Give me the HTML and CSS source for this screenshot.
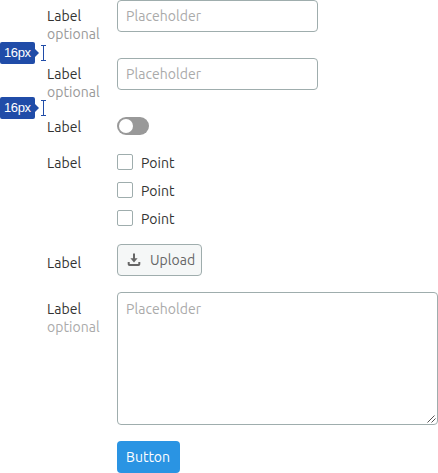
FILE: index.html
```html
<!DOCTYPE html>
<html lang="en">
<head>
<meta charset="utf-8">
<title>Form layout</title>
<link rel="stylesheet" href="styles.css">
</head>
<body>
<form class="form">
  <div class="row row-input">
    <div class="caption"><span class="label">Label</span><span class="optional">optional</span></div>
    <input class="input" type="text" placeholder="Placeholder">
    <div class="spacer first"><span class="tag">16px</span><svg class="beam" width="5" height="16" viewBox="0 0 5 16"><path d="M0 .5h5M0 15.5h5M2.5 0v16"/></svg></div>
  </div>
  <div class="row row-input">
    <div class="caption"><span class="label">Label</span><span class="optional">optional</span></div>
    <input class="input" type="text" placeholder="Placeholder">
    <div class="spacer"><span class="tag">16px</span><svg class="beam" width="5" height="16" viewBox="0 0 5 16"><path d="M0 .5h5M0 15.5h5M2.5 0v16"/></svg></div>
  </div>
  <div class="row row-switch">
    <div class="caption"><span class="label">Label</span></div>
    <span class="switch"><span class="knob"></span></span>
  </div>
  <div class="row row-checks">
    <div class="caption"><span class="label">Label</span></div>
    <div class="checks">
      <label class="check"><span class="box"></span><span class="point">Point</span></label>
      <label class="check"><span class="box"></span><span class="point">Point</span></label>
      <label class="check"><span class="box"></span><span class="point">Point</span></label>
    </div>
  </div>
  <div class="row row-upload">
    <div class="caption"><span class="label">Label</span></div>
    <button class="upload" type="button">
      <svg width="14" height="14" viewBox="0 0 14 14"><path d="M7 .5v6M1.7 9v2.2q0 .8.8.8h9q.8 0 .8-.8V9" fill="none" stroke="#666" stroke-width="2"/><path d="M3.4 5.3h7.2L7 9.5z" fill="#666"/></svg>
      <span>Upload</span>
    </button>
  </div>
  <div class="row row-area">
    <div class="caption"><span class="label">Label</span><span class="optional">optional</span></div>
    <div class="area"><span>Placeholder</span>
      <svg class="grip" width="9" height="8" viewBox="0 0 9 8"><path d="M.5 7.5l7-7M4.5 7.5l4-4" fill="none" stroke="#555"/></svg>
    </div>
  </div>
  <div class="row">
    <div class="caption"></div>
    <button class="submit" type="button">Button</button>
  </div>
</form>
</body>
</html>
```
FILE: styles.css
```css
* { box-sizing: border-box; }
body {
  margin: 0;
  background: #fff;
  color: #333;
  font: 14px/18px Ubuntu, "Noto Sans", sans-serif;
  letter-spacing: .06px;
  overflow: hidden;
}
.form { width: 438px; }
.row {
  position: relative;
  display: grid;
  grid-template-columns: 70px 321px;
  align-items: start;
  justify-items: start;
  padding-left: 47px;
}
.row-input { height: 58px; }
.row-switch { height: 36px; }
.row-checks { height: 92px; }
.row-upload { height: 48px; }
.row-area { height: 149px; }
.caption { display: flex; flex-direction: column; align-items: flex-start; padding-top: 7px; }
.row-switch .caption, .row-checks .caption { padding-top: 2px; }
.row-upload .caption { padding-top: 10px; }
.row-area .caption { padding-top: 8px; }
.optional { color: #999; }
.row-area .optional { color: #aaa; }
.input {
  width: 201px;
  height: 32px;
  padding: 0 8px;
  border: 1px solid #9fadad;
  border-radius: 4px;
  background: #fff;
  font: inherit;
  letter-spacing: inherit;
}
.input::placeholder { color: #aaa; opacity: 1; }
.spacer { position: absolute; left: 0; top: 42px; height: 22px; display: flex; align-items: center; }
.spacer:not(.first) { top: 39px; }
.tag {
  position: relative;
  width: 35px;
  height: 22px;
  border-radius: 2px;
  background: #204ca8;
  color: #fff;
  font: 13px/22px "Liberation Sans", sans-serif;
  letter-spacing: -.4px;
  padding-left: 4px;
}
.tag::after {
  content: "";
  position: absolute;
  left: 35px;
  top: 7px;
  border: 4px solid transparent;
  border-left-color: #204ca8;
  border-right: 0;
}
.beam { margin-left: 6px; fill: none; stroke: #204ca8; }
.switch { display: block; width: 32px; height: 18px; margin-top: 1px; padding: 2px; border-radius: 9px; background: #999; }
.knob { display: block; width: 14px; height: 14px; border-radius: 50%; background: #fff; }
.checks { display: grid; gap: 10px; padding-top: 2px; }
.check { display: flex; gap: 8px; height: 18px; }
.box { width: 16px; height: 16px; border: 1px solid #9fadad; border-radius: 2px; }
.upload {
  display: flex;
  align-items: center;
  gap: 9px;
  width: 85px;
  height: 32px;
  padding: 0 0 0 9px;
  border: 1px solid #9fadad;
  border-radius: 4px;
  background: #f5f7f7;
  color: #666;
  font: inherit;
  letter-spacing: inherit;
}
.area { position: relative; width: 321px; height: 133px; padding: 7px 8px; border: 1px solid #9fadad; border-radius: 4px; color: #aaa; }
.grip { position: absolute; right: 1px; bottom: 1px; }
.submit { width: 63px; height: 32px; padding: 0 0 0 9px; border: 0; border-radius: 4px; background: #2a94e3; color: #fff; font: inherit; text-align: left; }
```
